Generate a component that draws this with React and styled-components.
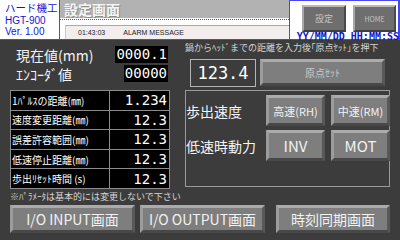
import React from 'react';
import styled, { createGlobalStyle } from 'styled-components';

const BLUE = '#4646f4';
const JP = '"Noto Sans CJK JP", "Liberation Sans", sans-serif';
const MONO = '"DejaVu Sans Mono", "Liberation Mono", monospace';

const Global = createGlobalStyle`
  html, body { margin: 0; padding: 0; background: #3c3c3c; }
  body { width: 400px; height: 240px; overflow: hidden; font-family: ${JP}; }
  * { box-sizing: border-box; }
`;

const Screen = styled.div`
  width: 400px;
  height: 240px;
  display: flex;
  flex-direction: column;
  background: #3c3c3c;
  overflow: hidden;
`;

const Header = styled.header`
  height: 40px;
  flex: none;
  display: flex;
  background: #fff;
  border-bottom: 1px solid ${BLUE};
`;

const Logo = styled.div`
  width: 60px;
  padding: 3px 0 0 5px;
  border-right: 1px solid ${BLUE};
  color: #1414d2;
  font-family: "Liberation Sans", "Noto Sans CJK JP", sans-serif;
  font-size: 10px;
  white-space: nowrap;
`;

const LogoLine = styled.div`
  height: 11.5px;
  line-height: 11.5px;
  font-size: ${p => p.$fs || 11}px;
`;

const TitleArea = styled.div`
  width: 230px;
  display: flex;
  flex-direction: column;
  border-right: 1px solid ${BLUE};
`;

const TitleBar = styled.div`
  height: 18px;
  background: #b2b2b2;
  color: #f6f6f6;
  font-size: 14px;
  font-weight: bold;
  line-height: 18px;
  padding-left: 4px;
  text-shadow: 1px 1px 0 #8e8e8e;
`;

const Dotted = styled.div`
  height: 2px;
  border-bottom: 1px dotted ${BLUE};
  margin-bottom: 5px;
`;

const Alarm = styled.div`
  flex: 1;
  margin-left: 5px;
  background: #f4eded;
  border-top: 1px solid #a8a8a8;
  border-left: 1px solid #c8c8c8;
  display: flex;
  align-items: center;
  gap: 18px;
  padding-left: 12px;
  font-family: "Liberation Sans", sans-serif;
  font-size: 7px;
  color: #222;
`;

const ClockArea = styled.div`
  flex: 1;
  display: flex;
  flex-direction: column;
  align-items: flex-end;
  border-top: 1px solid ${BLUE};
  border-right: 2px solid ${BLUE};
  padding: 4px 0 0 0;
`;

const HeadButtons = styled.div`
  display: flex;
  gap: 7px;
  margin-right: 2px;
`;

const HeadButton = styled.button`
  width: ${p => p.$w}px;
  height: 27px;
  margin: 0;
  padding: 0;
  background: #6e6e6e;
  color: #c4c4c4;
  font-family: ${JP};
  font-size: ${p => p.$fs}px;
  border: 2px solid;
  border-color: #b8b8b8 #4a4a4a #3e3e3e #a8a8a8;
`;

const Clock = styled.div`
  font-family: ${MONO};
  font-weight: bold;
  font-size: 10px;
  line-height: 8px;
  color: #1414c8;
  white-space: nowrap;
  margin-top: 1px;
  margin-right: -1px;
`;

const Body = styled.main`
  flex: 1;
  display: grid;
  grid-template-columns: 160px 205px;
  grid-template-rows: 50px 99px 16px 28px;
  column-gap: 15px;
  padding: 0 10px;
`;

const Readouts = styled.div`
  display: flex;
  flex-direction: column;
  gap: 2px;
  padding-top: 6px;
`;

const ReadoutRow = styled.div`
  height: 17px;
  display: flex;
  align-items: center;
  justify-content: space-between;
  padding: 0 2px 0 6px;
`;

const Label = styled.span`
  color: #f4f4f4;
  font-size: 14px;
  white-space: nowrap;
`;

const ValueBox = styled.span`
  background: #000;
  color: #fff;
  font-family: ${MONO};
  font-size: 14px;
  height: 17px;
  line-height: 17px;
  padding: 0 1px;
`;

const Origin = styled.div`
  display: flex;
  flex-direction: column;
  padding-top: 3px;
`;

const Hint = styled.div`
  color: #d4d4d4;
  font-size: 9px;
  line-height: 10px;
  white-space: nowrap;
`;

const OriginRow = styled.div`
  display: flex;
  align-items: flex-start;
  gap: 4px;
  margin-top: 6px;
  padding-left: 5px;
`;

const InputBox = styled.div`
  width: 66px;
  height: 28px;
  border: 1px solid #b4b4b4;
  color: #fff;
  font-family: ${MONO};
  font-size: 17px;
  line-height: 26px;
  text-align: center;
`;

const Bevel = styled.button`
  margin: 0;
  padding: 0;
  width: ${p => p.$w}px;
  height: ${p => p.$h}px;
  background: #7e7e7e;
  color: ${p => p.$dim ? '#cacaca' : '#f2f2f2'};
  font-family: ${JP};
  font-size: ${p => p.$fs}px;
  white-space: nowrap;
  border: 3px solid;
  border-color: #ababab #585858 #484848 #9c9c9c;
  margin-left: ${p => p.$ml || 0}px;
`;

const Table = styled.div`
  display: grid;
  grid-template-columns: 98px 1fr;
  grid-template-rows: repeat(5, 1fr);
  gap: 1px;
  padding: 1px;
  background: #8c8c8c;
`;

const Cell = styled.div`
  background: #000;
  display: flex;
  align-items: center;
  justify-content: ${p => p.$right ? 'flex-end' : 'flex-start'};
  padding: ${p => p.$right ? '0 2px 0 0' : '0 0 0 1px'};
  color: #fff;
  font-family: ${p => p.$right ? MONO : JP};
  font-size: ${p => p.$right ? 14 : 10}px;
  white-space: nowrap;
  overflow: hidden;
`;

const Panel = styled.div`
  height: 97px;
  border: 1px solid #9a9a9a;
  display: grid;
  grid-template-columns: 74px 59px 59px;
  grid-auto-rows: 31px;
  column-gap: 6px;
  row-gap: 4px;
  padding-top: 4px;
  align-content: start;
`;

const PanelLabel = styled.div`
  align-self: center;
  color: #f4f4f4;
  font-size: 14px;
  white-space: nowrap;
`;

const Note = styled.div`
  grid-column: 1 / -1;
  color: #d6d6d6;
  font-size: 9px;
  line-height: 16px;
  white-space: nowrap;
`;

const NavRow = styled.nav`
  grid-column: 1 / -1;
  display: flex;
  gap: 5px;
`;

const params = [
  ['1ﾊﾟﾙｽの距離(㎜)', '1.234'],
  ['速度変更距離(㎜)', '12.3'],
  ['誤差許容範囲(㎜)', '12.3'],
  ['低速停止距離(㎜)', '12.3'],
  ['歩出ﾘｾｯﾄ時間 (s)', '12.3'],
];

export default function App() {
  return (
    <Screen>
      <Global />
      <Header>
        <Logo>
          <LogoLine $fs={10.5}>ハード機工</LogoLine>
          <LogoLine $fs={10}>HGT-900</LogoLine>
          <LogoLine $fs={10}>Ver. 1.00</LogoLine>
        </Logo>
        <TitleArea>
          <TitleBar>設定画面</TitleBar>
          <Dotted />
          <Alarm>
            <span>01:43:03</span>
            <span>ALARM MESSAGE</span>
          </Alarm>
        </TitleArea>
        <ClockArea>
          <HeadButtons>
            <HeadButton $w={44} $fs={9}>設定</HeadButton>
            <HeadButton $w={43} $fs={7}>HOME</HeadButton>
          </HeadButtons>
          <Clock>YY/MM/DD HH:MM:SS</Clock>
        </ClockArea>
      </Header>
      <Body>
        <Readouts>
          <ReadoutRow>
            <Label>現在値(mm)</Label>
            <ValueBox>0000.1</ValueBox>
          </ReadoutRow>
          <ReadoutRow>
            <Label>ｴﾝｺｰﾀﾞ値</Label>
            <ValueBox>00000</ValueBox>
          </ReadoutRow>
        </Readouts>
        <Origin>
          <Hint>鍋からﾍｯﾄﾞまでの距離を入力後｢原点ｾｯﾄ｣を押下</Hint>
          <OriginRow>
            <InputBox>123.4</InputBox>
            <Bevel $w={125} $h={27} $fs={10} $dim>原点ｾｯﾄ</Bevel>
          </OriginRow>
        </Origin>
        <Table>
          {params.map(([k, v]) => (
            <React.Fragment key={k}>
              <Cell>{k}</Cell>
              <Cell $right>{v}</Cell>
            </React.Fragment>
          ))}
        </Table>
        <Panel>
          <PanelLabel>歩出速度</PanelLabel>
          <Bevel $w={59} $h={31} $fs={11}>高速(RH)</Bevel>
          <Bevel $w={59} $h={31} $fs={11}>中速(RM)</Bevel>
          <PanelLabel>低速時動力</PanelLabel>
          <Bevel $w={59} $h={31} $fs={15}>INV</Bevel>
          <Bevel $w={59} $h={31} $fs={15}>MOT</Bevel>
        </Panel>
        <Note>※ﾊﾟﾗﾒｰﾀは基本的には変更しないで下さい</Note>
        <NavRow>
          <Bevel $w={125} $h={28} $fs={14}>I/O INPUT画面</Bevel>
          <Bevel $w={125} $h={28} $fs={14}>I/O OUTPUT画面</Bevel>
          <Bevel $w={114} $h={28} $fs={14} $ml={6}>時刻同期画面</Bevel>
        </NavRow>
      </Body>
    </Screen>
  );
}
